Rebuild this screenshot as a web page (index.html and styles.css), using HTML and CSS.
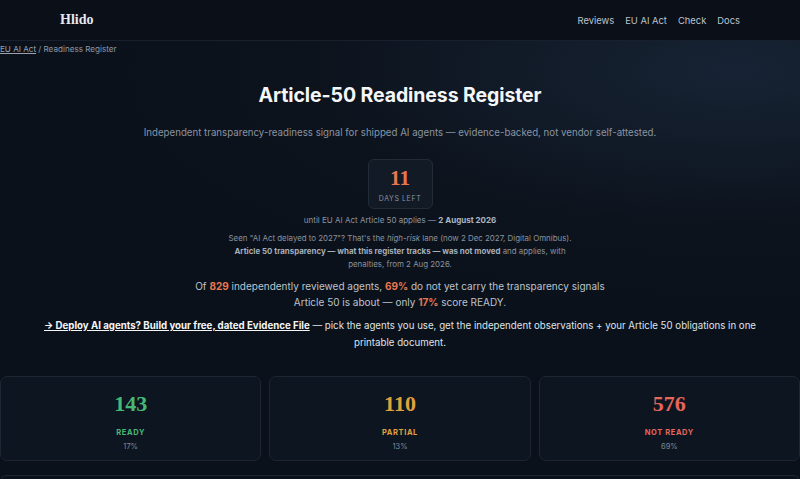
FILE: index.html
```html
<!DOCTYPE html>
<html lang="en">
<head>
    <meta charset="UTF-8">
    <title>Article-50 Readiness Register — Hlido</title>
    <link rel="stylesheet" href="styles.css">
</head>
<body>
    <header class="topbar">
        <a class="brand" href="#">Hlido</a>
        <nav class="nav">
            <a href="#">Reviews</a>
            <a href="#">EU AI Act</a>
            <a href="#">Check</a>
            <a href="#">Docs</a>
        </nav>
    </header>

    <main class="page">
        <div class="crumbs"><a href="#">EU AI Act</a> / Readiness Register</div>

        <section class="hero">
            <h1>Article-50 Readiness Register</h1>
            <p class="lede">Independent transparency-readiness signal for shipped AI agents — evidence-backed, not vendor self-attested.</p>

            <div class="countdown">
                <span class="count-num">11</span>
                <span class="count-label">DAYS LEFT</span>
            </div>
            <p class="until">until EU AI Act Article 50 applies — <b>2 August 2026</b></p>
            <p class="note">Seen "AI Act delayed to 2027"? That's the <i>high-risk</i> lane (now 2 Dec 2027, Digital Omnibus).<br>
                <b>Article 50 transparency — what this register tracks — was not moved</b> and applies, with<br>
                penalties, from 2 Aug 2026.</p>

            <p class="summary">Of <b>829</b> independently reviewed agents, <b>69%</b> do not yet carry the transparency signals<br>
                Article 50 is about — only <b>17%</b> score READY.</p>

            <p class="cta"><a href="#">→ Deploy AI agents? Build your free, dated Evidence File</a> — pick the agents you use, get the independent observations + your Article 50 obligations in one printable document.</p>
        </section>

        <section class="stats">
            <div class="stat ready">
                <div class="stat-num">143</div>
                <div class="stat-label">READY</div>
                <div class="stat-pct">17%</div>
            </div>
            <div class="stat partial">
                <div class="stat-num">110</div>
                <div class="stat-label">PARTIAL</div>
                <div class="stat-pct">13%</div>
            </div>
            <div class="stat notready">
                <div class="stat-num">576</div>
                <div class="stat-label">NOT READY</div>
                <div class="stat-pct">69%</div>
            </div>
        </section>
        <div class="next-row"></div>
    </main>
</body>
</html>
```

FILE: styles.css
```css
/* Hlido register page */
html, body {
    margin: 0;
    padding: 0;
}

body {
    background: radial-gradient(ellipse 700px 260px at 92% 70px, #172334 0%, #0c131d 60%, #0b111a 100%);
    background-color: #0b111a;
    color: #c3cad4;
    font-family: Inter, "Noto Sans", sans-serif;
    height: 479px;
    overflow: hidden;
}

a {
    color: inherit;
}

.topbar {
    display: flex;
    align-items: center;
    justify-content: space-between;
    height: 40px;
    padding: 0 60px;
    background: #0a0f18;
    border-bottom: 1px solid #17202c;
}

.brand {
    font-family: "Liberation Serif", "DejaVu Serif", serif;
    font-weight: bold;
    font-size: 14px;
    color: #e6e9ee;
    text-decoration: none;
}

.nav {
    display: flex;
    gap: 11px;
}

.nav a {
    font-size: 9.4px;
    color: #bcc4cf;
    text-decoration: none;
}

.crumbs {
    font-size: 8.1px;
    color: #8e98a5;
    padding-top: 3px;
    height: 14px;
}

.crumbs a {
    color: #9aa4b1;
}

.hero {
    text-align: center;
}

.hero h1 {
    margin: 25px 0 0;
    font-size: 19.5px;
    font-weight: 700;
    color: #f4f6f8;
    letter-spacing: -0.1px;
}

.lede {
    margin: 20px 0 0;
    font-size: 9.7px;
    color: #8a94a2;
}

.countdown {
    display: inline-flex;
    flex-direction: column;
    align-items: center;
    margin-top: 21px;
    width: 65px;
    height: 50px;
    box-sizing: border-box;
    padding-top: 7px;
    background: #121a25;
    border: 1px solid #222c39;
    border-radius: 6px;
}

.count-num {
    font-family: "Liberation Serif", "DejaVu Serif", serif;
    font-weight: bold;
    font-size: 21px;
    line-height: 22px;
    color: #e7774f;
}

.count-label {
    margin-top: 5px;
    font-size: 7px;
    letter-spacing: 0.6px;
    color: #8a94a2;
}

.until {
    margin: 6px 0 0;
    font-size: 8px;
    color: #8a94a2;
}

.until b {
    color: #aeb6c1;
}

.note {
    margin: 7px 0 0;
    font-size: 7.9px;
    line-height: 13px;
    color: #8a939f;
}

.note b {
    color: #a6aeb9;
}

.summary {
    margin: 7px 0 0;
    font-size: 10px;
    line-height: 16px;
    color: #bcc3cd;
}

.summary b {
    color: #e7774f;
}

.cta {
    margin: 7px auto 0;
    max-width: 725px;
    font-size: 9.7px;
    line-height: 17px;
    color: #dfe3e8;
}

.cta a {
    font-weight: 700;
    color: #f4f6f8;
}

.stats {
    display: grid;
    grid-template-columns: repeat(3, 1fr);
    gap: 8px;
    margin-top: 25px;
}

.stat {
    height: 85px;
    box-sizing: border-box;
    padding-top: 14px;
    text-align: center;
    background: #0d1520;
    border: 1px solid #1d2733;
    border-radius: 7px;
}

.stat-num {
    font-family: "Liberation Serif", "DejaVu Serif", serif;
    font-weight: bold;
    font-size: 22px;
    line-height: 26px;
}

.stat-label {
    margin-top: 11px;
    font-size: 7.5px;
    line-height: 10px;
    font-weight: 700;
    letter-spacing: 0.6px;
}

.stat-pct {
    margin-top: 4px;
    font-size: 7.5px;
    line-height: 10px;
    color: #7f8a98;
}

.ready .stat-num, .ready .stat-label { color: #47b974; }
.partial .stat-num, .partial .stat-label { color: #e0a23c; }
.notready .stat-num, .notready .stat-label { color: #e5665a; }

.next-row {
    margin-top: 14px;
    height: 40px;
    border: 1px solid #1d2733;
    border-radius: 7px;
}
```
